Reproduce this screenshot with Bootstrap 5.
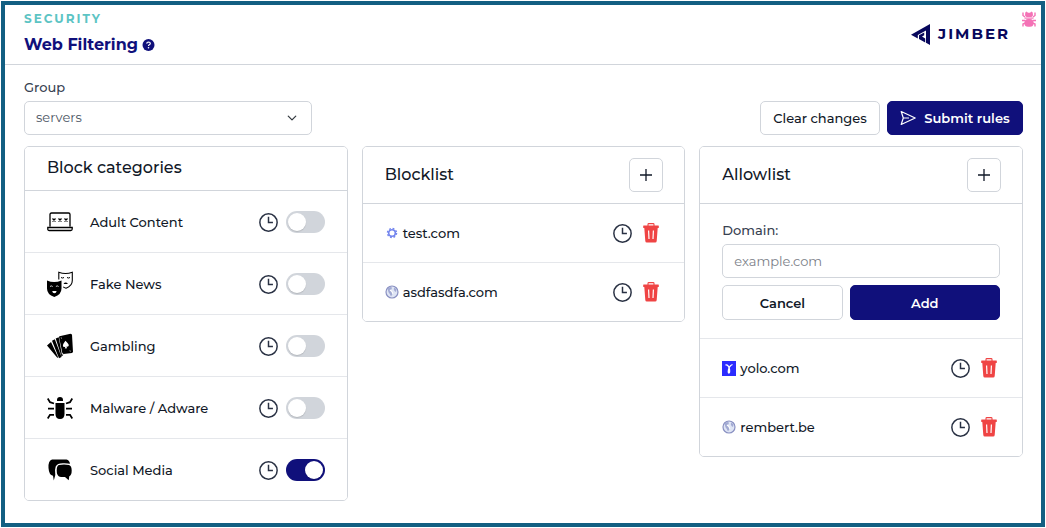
<!DOCTYPE html>
<html lang="en">
<head>
<meta charset="utf-8">
<meta name="viewport" content="width=device-width, initial-scale=1">
<title>Web Filtering</title>
<link rel="stylesheet" href="https://cdn.jsdelivr.net/npm/bootstrap@5.3.0/dist/css/bootstrap.min.css">
<style>
  :root { --navy: #10107b; --line: #d1d5db; --soft-line: #e5e7eb; }
  body { font-family: Montserrat, Inter, sans-serif; font-size: 13px; line-height: 20px; font-weight: 500; color: #111827; background: #fff; padding: 1px; }
  .app-frame { min-height: calc(100vh - 2px); border: 4px solid #125f82; }
  .app-header { border-bottom: 1px solid var(--line); padding: 4px 31px 7px 19px; }
  .eyebrow { font-size: 12px; line-height: 20px; font-weight: 700; letter-spacing: 2px; color: #5cc4c4; }
  .page-title { font-size: 16px; line-height: 24px; font-weight: 700; color: var(--navy); padding-top: 4px; }
  .help-link { line-height: 0; }
  .brand { font-size: 15px; font-weight: 700; letter-spacing: 2px; color: #07075c; gap: 8px; padding-top: 2px; }
  .debug-bug { top: 6px; right: 5px; line-height: 0; }
  .app-main { padding: 12px 18px 20px 19px; }
  .field-label { color: #374151; line-height: 20px; }
  .group-field { width: 288px; }
  .form-select, .form-control { height: 34px; font-size: 13px; border-color: var(--line); border-radius: 5px; padding: 6px 11px; color: #4b5563; font-weight: 400; }
  .form-select { background-size: 10px 10px; background-position: right 14px center; }
  .form-control::placeholder { color: #7b8088; }
  .btn { --bs-btn-font-size: 13px; --bs-btn-line-height: 20px; --bs-btn-padding-y: 6px; --bs-btn-padding-x: 10px; --bs-btn-border-radius: 5px; --bs-btn-font-weight: 600; height: 34px; }
  .btn-plain { --bs-btn-color: #111827; --bs-btn-border-color: var(--line); --bs-btn-bg: #fff; --bs-btn-hover-bg: #f3f4f6; --bs-btn-hover-border-color: var(--line); }
  .btn-navy { --bs-btn-color: #fff; --bs-btn-bg: var(--navy); --bs-btn-border-color: var(--navy); --bs-btn-hover-bg: #0b0b60; --bs-btn-hover-color: #fff; }
  .toolbar-actions { gap: 7px; }
  .btn-clear { --bs-btn-font-weight: 500; width: 120px; }
  .btn-submit { width: 136px; }
  .btn-square { display: inline-flex; align-items: center; justify-content: center; width: 34px; padding: 0; }
  .panels { --bs-gutter-x: 14px; --bs-gutter-y: 14px; margin-top: -3px; }
  .card { --bs-card-border-color: var(--line); --bs-card-border-radius: 5px; --bs-card-inner-border-radius: 4px; --bs-card-cap-bg: #fff; --bs-card-cap-padding-x: 22px; --bs-card-cap-padding-y: 11px; }
  .card-title { font-size: 16px; line-height: 22px; font-weight: 500; }
  .card-header { border-color: var(--line); padding-top: 10px; }
  .card-header.with-action { padding-top: 11px; padding-right: 21px; }
  .list-group { --bs-list-group-border-color: var(--soft-line); --bs-list-group-color: #111827; --bs-list-group-item-padding-x: 22px; --bs-list-group-item-padding-y: 19px; }
  .categories .list-group-item { padding-top: 18px; padding-bottom: 17px; }
  .category-icon { width: 26px; height: 26px; }
  .category-name { padding-left: 17px; }
  .icon-btn { display: inline-flex; border: 0; padding: 0; background: none; color: #293143; }
  .icon-btn.remove { color: #ef4444; margin: 0 3px; }
  .form-switch { min-height: 22px; }
  .form-switch .form-check-input { display: flex; width: 39px; height: 22px; padding: 2px; margin: 0; border: 0; background-color: var(--line); background-image: none; border-radius: 11px; }
  .form-switch .form-check-input::before { content: ""; width: 18px; height: 18px; border-radius: 50%; background: #fff; box-shadow: 0 1px 1px #0002; }
  .form-switch .form-check-input:checked { background-color: var(--navy); background-image: none; justify-content: flex-end; }
  .domain-form { padding: 16px 22px 18px; border-bottom: 1px solid var(--soft-line); }
  .card > .domain-form + .list-group { border-top: 0; }
  .form-actions { display: grid; grid-template-columns: 4fr 5fr; gap: 7px; margin-top: 7px; }
  .form-actions .btn { height: 35px; }
</style>
</head>
<body>
<svg class="d-none" aria-hidden="true">
  <symbol id="clock" viewBox="0 0 18 18"><g fill="none" stroke="currentColor" stroke-width="1.4"><circle cx="9" cy="9" r="8.2"/><path d="M9 3.5V9h4.2"/></g></symbol>
  <symbol id="trash" viewBox="0 0 16 20"><path d="M5 3V1.4Q5 .6 5.800.6h4.400q.8 0 .8.800V3" fill="none" stroke="currentColor" stroke-width="1.1"/><path fill="currentColor" fill-rule="evenodd" d="M.6 2.600h14.800q.4 0 .4.500v1.400q0 .5-.5.500h-.6l-1 13q-.1 1.500-1.600 1.500H3.900q-1.500 0-1.600-1.500l-1-13H.7q-.5 0-.5-.5V3.100q0-.5.4-.5zM5 7.500l.4 8.500h1.200L6.200 7.500zm4.800 0L9.400 16h1.200l.4-8.500z"/></symbol>
  <symbol id="plus" viewBox="0 0 14 14"><path d="M7 1v12M1 7h12" fill="none" stroke="currentColor" stroke-width="1.3"/></symbol>
  <symbol id="globe" viewBox="0 0 14 14"><circle cx="7" cy="7" r="6" fill="#dfe5f4" stroke="#8990c2" stroke-width="1.2"/><path d="M2.500 3.500 5 2l2 .5-.5 1.700L5 5.200l1.300 1 1.700.7-.6 2.100L6 11.500 4.800 9 3.500 7.200zM9.500 2.500l2 2-.5 2.500-1.500-1-.8-2z" fill="#a2aad3"/><path d="m5 5 2 1.500.8 2.300" fill="none" stroke="#fff" stroke-width="1.2"/></symbol>
</svg>

<div class="app-frame position-relative">
  <header class="app-header d-flex justify-content-between align-items-center">
    <div>
      <div class="eyebrow">SECURITY</div>
      <h1 class="page-title d-flex align-items-center gap-1 mb-0">Web Filtering
        <a class="help-link" href="#" aria-label="Help"><svg width="13" height="12" viewBox="0 0 12 12"><circle cx="6" cy="6" r="6" fill="#10107b"/><path d="M4.200 4.600Q4.300 3 6 3q1.800.1 1.800 1.500 0 .8-1 1.300-.8.4-.8 1.100" fill="none" stroke="#fff" stroke-width="1.2"/><circle cx="6" cy="8.700" r=".8" fill="#fff"/></svg></a>
      </h1>
    </div>
    <div class="brand d-flex align-items-center"><svg width="19" height="21" viewBox="0 0 19 21" aria-hidden="true"><path fill="#07075c" d="M0 10.700 19 0v21l-4-2.300V6.500L6.800 11v3.500z"/><path fill="#07075c" d="m8 11.300 5.200-2.900v2.800l-2.200 1.300 3.200 1.900v4L8 14.900z"/></svg>JIMBER</div>
    <a class="debug-bug position-absolute" href="#" aria-label="Report a bug"><svg width="14" height="16" viewBox="0 0 14 16"><g fill="#f472b6"><path d="M3 4.500 3.300 1.500 4.500.5 6 1.800h2L9.500.500l1.200 1L11 4.500 9.500 6h-5z"/><path d="M2.500 6.500h9v1.200h-9z"/><rect x="2.500" y="8" width="9" height="7.800" rx="3.500"/></g><path d="M3 6 1 4.500V1.500M11 6l2-1.500V1.500M3 9.500H0m11 0h3M3.500 12 1 13v2.500M10.500 12l2.500 1v2.500" fill="none" stroke="#f472b6" stroke-width="1.400"/></svg></a>
  </header>

  <main class="app-main">
    <div class="d-flex flex-wrap justify-content-between align-items-end gap-2">
      <div class="group-field">
        <label class="field-label d-block mb-1" for="group">Group</label>
        <select class="form-select" id="group"><option>servers</option></select>
      </div>
      <div class="toolbar-actions d-flex">
        <button class="btn btn-plain btn-clear" type="button">Clear changes</button>
        <button class="btn btn-navy btn-submit d-flex align-items-center justify-content-center gap-2" type="button"><svg width="16" height="16" viewBox="0 0 16 16" fill="none" stroke="#fff" stroke-width="1.2" stroke-linejoin="round" aria-hidden="true"><path d="M1.200 1.500 15.200 8l-14 6.500L3.300 8zM3.300 8H9"/></svg>Submit rules</button>
      </div>
    </div>

    <div class="row panels align-items-start">
      <div class="col-12 col-md-4">
        <section class="card">
          <div class="card-header"><h2 class="card-title mb-0">Block categories</h2></div>
          <ul class="list-group list-group-flush categories">
            <li class="list-group-item d-flex align-items-center">
              <svg class="category-icon" viewBox="0 0 26 26" fill="none" stroke="#000" stroke-width="1.300" aria-hidden="true"><path d="M3 17.500V5.500Q3 4 4.500 4h17Q23 4 23 5.500v12M.8 18.500h24.400v1.500q0 1.500-1.500 1.500H2.300Q.8 21.500.8 20z"/><path d="m5.500 9.500 3 3m0-3-3 3m6-3 3 3m0-3-3 3m6-3 3 3m0-3-3 3"/></svg>
              <label class="category-name me-auto" for="adult">Adult Content</label>
              <button class="icon-btn me-2" type="button" aria-label="Schedule Adult Content"><svg width="19" height="19"><use href="#clock"/></svg></button>
              <div class="form-check form-switch p-0 m-0"><input class="form-check-input" type="checkbox" role="switch" id="adult"></div>
            </li>
            <li class="list-group-item d-flex align-items-center">
              <svg class="category-icon" viewBox="0 0 26 26" aria-hidden="true"><path d="M11.800 8.500V1.200q6.700 2.600 13.500 0v8.300q0 5.500-6.300 7.700-1.600-.5-2.800-1.300" fill="none" stroke="#000" stroke-width="1.1"/><path d="M14 6.500q1.500 1 3 0m3 0q1.500 1 3 0" fill="none" stroke="#000"/><path d="M16.500 13q2-2.800 4.500 0z"/><path d="M0 9.500q7 3.200 14.500 0v8q0 6-7.200 8.500Q0 23.500 0 17.500z"/><path d="M3 15.500q1.300-1.200 2.700 0m3.200 0q1.300-1.200 2.700 0" fill="none" stroke="#fff" stroke-width=".8"/><path d="M5.200 20h4.400q-.4 2.200-2.200 2.200T5.200 20z" fill="#fff"/></svg>
              <label class="category-name me-auto" for="fake">Fake News</label>
              <button class="icon-btn me-2" type="button" aria-label="Schedule Fake News"><svg width="19" height="19"><use href="#clock"/></svg></button>
              <div class="form-check form-switch p-0 m-0"><input class="form-check-input" type="checkbox" role="switch" id="fake"></div>
            </li>
            <li class="list-group-item d-flex align-items-center">
              <svg class="category-icon" viewBox="0 0 26 26" aria-hidden="true"><path d="m0 12.500 4-3.600 7 15.100-.5 1zM5 7.800 7.800 6.200 14.500 24l-2.500 1.200zM8.700 5.500l3-1.200 3.200 17.200 1.600.2-2 1.700zM12.500 3.200 23.500.800l1.500.8 1 17.400-1 1-8.500.9-1.200-.9-3.300-16z"/><path d="M18.400 7.700q3.400 3 3.400 4.500 0 1.700-2.400 1.400l.7 1.700-2.300.2.500-1.700q-2.400.4-2.400-1.100 0-1.800 2.500-5z" fill="#fff"/><path d="m14.200 4.500.3 1m8.500 12 .3 1" stroke="#fff" stroke-width=".8"/></svg>
              <label class="category-name me-auto" for="gambling">Gambling</label>
              <button class="icon-btn me-2" type="button" aria-label="Schedule Gambling"><svg width="19" height="19"><use href="#clock"/></svg></button>
              <div class="form-check form-switch p-0 m-0"><input class="form-check-input" type="checkbox" role="switch" id="gambling"></div>
            </li>
            <li class="list-group-item d-flex align-items-center">
              <svg class="category-icon" viewBox="0 0 26 26" aria-hidden="true"><path d="M10 6V5q0-3 3-3t3 3v1zM8.500 8h9v11q0 5-4.500 5t-4.500-5z"/><path d="M.7 3.500 3 7.200l4 1.300M25.300 3.500 23 7.200l-4 1.300M1 13.700h6m12 0h6M.7 23.500 3 19.800h4M25.300 23.500 23 19.800h-4" fill="none" stroke="#000" stroke-width="1.800"/></svg>
              <label class="category-name me-auto" for="malware">Malware / Adware</label>
              <button class="icon-btn me-2" type="button" aria-label="Schedule Malware / Adware"><svg width="19" height="19"><use href="#clock"/></svg></button>
              <div class="form-check form-switch p-0 m-0"><input class="form-check-input" type="checkbox" role="switch" id="malware"></div>
            </li>
            <li class="list-group-item d-flex align-items-center">
              <svg class="category-icon" viewBox="0 0 26 26" aria-hidden="true"><path d="M5 2.500h14.500q3 .8 3.500 4.200-2.500-.6-7-.5-6 .1-7.300 3.300-1.200 3-.4 8.500L6.800 23.500 6 18.800q-4-.6-4.500-7.800T5 2.500z"/><path d="M12 8q5-.8 10 0 2.700.8 2.700 5.500t-2.400 5.800l-.6 4-3.700-3.300q-3.500.3-6-.5-2.300-1.500-2.300-6Q9.700 8.500 12 8z"/></svg>
              <label class="category-name me-auto" for="social">Social Media</label>
              <button class="icon-btn me-2" type="button" aria-label="Schedule Social Media"><svg width="19" height="19"><use href="#clock"/></svg></button>
              <div class="form-check form-switch p-0 m-0"><input class="form-check-input" type="checkbox" role="switch" id="social" checked></div>
            </li>
          </ul>
        </section>
      </div>

      <div class="col-12 col-md-4">
        <section class="card">
          <div class="card-header with-action d-flex justify-content-between align-items-center"><h2 class="card-title mb-0">Blocklist</h2><button class="btn btn-plain btn-square" type="button" aria-label="Add to blocklist"><svg width="14" height="14"><use href="#plus"/></svg></button></div>
          <ul class="list-group list-group-flush">
            <li class="list-group-item d-flex align-items-center">
              <svg class="me-1" width="14" height="14" viewBox="0 0 14 14" aria-hidden="true"><circle cx="7" cy="7" r="3.300" fill="none" stroke="#7385ee" stroke-width="1.600"/><circle cx="7" cy="7" r="4.500" fill="none" stroke="#7385ee" stroke-width="1.500" stroke-dasharray="1.800 1.740"/></svg>
              <span class="me-auto">test.com</span>
              <button class="icon-btn me-2" type="button" aria-label="Schedule test.com"><svg width="19" height="19"><use href="#clock"/></svg></button>
              <button class="icon-btn remove" type="button" aria-label="Remove test.com"><svg width="16" height="20"><use href="#trash"/></svg></button>
            </li>
            <li class="list-group-item d-flex align-items-center">
              <svg class="me-1" width="14" height="14" aria-hidden="true"><use href="#globe"/></svg>
              <span class="me-auto">asdfasdfa.com</span>
              <button class="icon-btn me-2" type="button" aria-label="Schedule asdfasdfa.com"><svg width="19" height="19"><use href="#clock"/></svg></button>
              <button class="icon-btn remove" type="button" aria-label="Remove asdfasdfa.com"><svg width="16" height="20"><use href="#trash"/></svg></button>
            </li>
          </ul>
        </section>
      </div>

      <div class="col-12 col-md-4">
        <section class="card">
          <div class="card-header with-action d-flex justify-content-between align-items-center"><h2 class="card-title mb-0">Allowlist</h2><button class="btn btn-plain btn-square" type="button" aria-label="Add to allowlist"><svg width="14" height="14"><use href="#plus"/></svg></button></div>
          <form class="domain-form">
            <label class="field-label d-block mb-1" for="domain">Domain:</label>
            <input class="form-control" type="text" id="domain" placeholder="example.com">
            <div class="form-actions">
              <button class="btn btn-plain" type="button">Cancel</button>
              <button class="btn btn-navy" type="button">Add</button>
            </div>
          </form>
          <ul class="list-group list-group-flush">
            <li class="list-group-item d-flex align-items-center">
              <svg class="me-1" width="14" height="15" viewBox="0 0 14 15" aria-hidden="true"><path fill="#2b2bff" d="M0 0h14v15H0z"/><path d="M3.500 4q3-.5 4 4.500.4 3.500-.6 3.500T6.500 9Q7 5 10.500 3.500" fill="none" stroke="#fff" stroke-width="1.300"/></svg>
              <span class="me-auto">yolo.com</span>
              <button class="icon-btn me-2" type="button" aria-label="Schedule yolo.com"><svg width="19" height="19"><use href="#clock"/></svg></button>
              <button class="icon-btn remove" type="button" aria-label="Remove yolo.com"><svg width="16" height="20"><use href="#trash"/></svg></button>
            </li>
            <li class="list-group-item d-flex align-items-center">
              <svg class="me-1" width="14" height="14" aria-hidden="true"><use href="#globe"/></svg>
              <span class="me-auto">rembert.be</span>
              <button class="icon-btn me-2" type="button" aria-label="Schedule rembert.be"><svg width="19" height="19"><use href="#clock"/></svg></button>
              <button class="icon-btn remove" type="button" aria-label="Remove rembert.be"><svg width="16" height="20"><use href="#trash"/></svg></button>
            </li>
          </ul>
        </section>
      </div>
    </div>
  </main>
</div>
<script src="https://cdn.jsdelivr.net/npm/bootstrap@5.3.0/dist/js/bootstrap.bundle.min.js"></script>
</body>
</html>
